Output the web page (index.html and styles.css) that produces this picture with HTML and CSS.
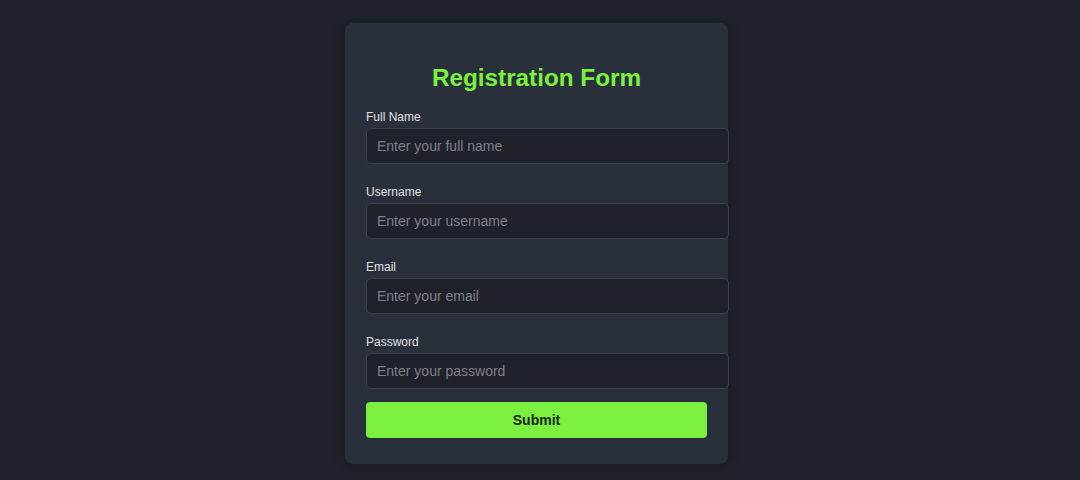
FILE: index.html
```html
<!DOCTYPE html>
<html lang="en">
<head>
<meta charset="utf-8">
<title>Registration Form</title>
<link rel="stylesheet" href="styles.css">
</head>
<body>
<div class="page">
  <form class="card">
    <h2 class="title">Registration Form</h2>
    <div class="field">
      <label class="label" for="fullname">Full Name</label>
      <input class="input" id="fullname" type="text" placeholder="Enter your full name">
    </div>
    <div class="field">
      <label class="label" for="username">Username</label>
      <input class="input" id="username" type="text" placeholder="Enter your username">
    </div>
    <div class="field">
      <label class="label" for="email">Email</label>
      <input class="input" id="email" type="email" placeholder="Enter your email">
    </div>
    <div class="field last">
      <label class="label" for="password">Password</label>
      <input class="input" id="password" type="password" placeholder="Enter your password">
    </div>
    <button class="submit" type="button">Submit</button>
  </form>
</div>
</body>
</html>
```
FILE: styles.css
```css
html, body {
  margin: 0;
  padding: 0;
  background: #1f222a;
  font-family: "Liberation Sans", Arial, sans-serif;
}
.page {
  min-height: 480px;
  display: flex;
  justify-content: center;
  align-items: flex-start;
  padding-top: 23px;
  padding-right: 7px;
  box-sizing: border-box;
}
.card {
  width: 341px;
  padding: 20px 21px 26px;
  background: #2a2f3c;
  border-radius: 8px;
  box-shadow: 0 0 12px rgba(0,0,0,0.25);
}
.title {
  margin: 20px 0 16px;
  text-align: center;
  color: #7cf03f;
  font-size: 24.3px;
  font-weight: bold;
  line-height: 30px;
}
.field {
  margin-bottom: 20px;
}
.field.last {
  margin-bottom: 13px;
}
.label {
  display: block;
  color: #e0e0e0;
  font-size: 12px;
  line-height: 16px;
  margin-bottom: 3px;
}
.input {
  display: block;
  width: 100%;
  height: 16px;
  padding: 9px 10px;
  border: 1px solid #3b404d;
  border-radius: 5px;
  background: #1f222a;
  color: #ddd;
  font-family: "Liberation Sans", Arial, sans-serif;
  font-size: 14px;
  outline: none;
}
.input::placeholder {
  color: #7d8088;
}
.submit {
  display: block;
  width: 100%;
  height: 36px;
  border: none;
  border-radius: 4px;
  background: #7cf03f;
  color: #1b2614;
  font-family: "Liberation Sans", Arial, sans-serif;
  font-size: 14px;
  font-weight: bold;
  cursor: pointer;
}
```
